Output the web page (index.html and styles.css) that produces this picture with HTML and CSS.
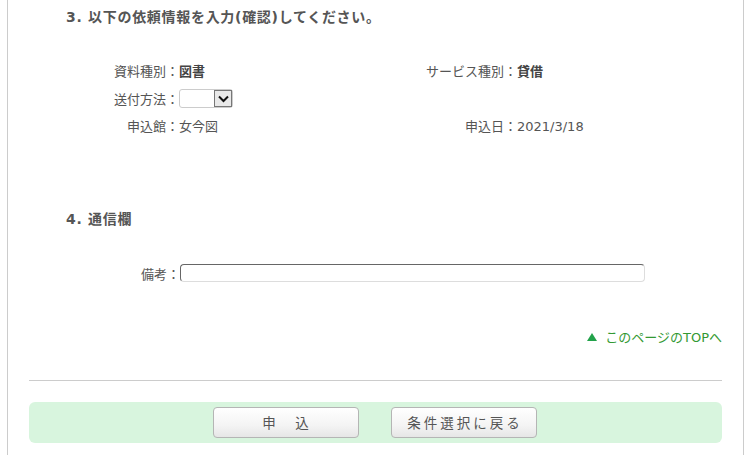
FILE: index.html
```html
<!DOCTYPE html>
<html lang="ja">
<head>
    <meta charset="UTF-8">
    <title>依頼情報の入力</title>
    <link rel="stylesheet" href="styles.css">
</head>
<body>
    <div class="page">
        <h2 class="step">3. 以下の依頼情報を入力(確認)してください。</h2>
        <div class="info">
            <div class="label">資料種別：</div>
            <div class="value"><b>図書</b></div>
            <div class="label">サービス種別：</div>
            <div class="value"><b>貸借</b></div>

            <div class="label">送付方法：</div>
            <div class="value">
                <span class="select"><span class="arrow">
                    <svg width="11" height="8" viewBox="0 0 11 8"><path d="M1 1.5 L5.5 6 L10 1.5" fill="none" stroke="#111" stroke-width="2"/></svg>
                </span></span>
            </div>
            <div class="label"></div>
            <div class="value"></div>

            <div class="label">申込館：</div>
            <div class="value">女今図</div>
            <div class="label">申込日：</div>
            <div class="value">2021/3/18</div>
        </div>

        <h2 class="step step4">4. 通信欄</h2>
        <div class="remark">
            <span class="label">備考：</span>
            <span class="field"></span>
        </div>

        <div class="totop"><span class="tri"></span>このページのTOPへ</div>

        <div class="rule"></div>

        <div class="actions">
            <div class="btn">申　込</div>
            <div class="btn">条件選択に戻る</div>
        </div>
    </div>
</body>
</html>
```

FILE: styles.css
```css
body {
    margin: 0;
    background-color: #fff;
    font-family: "DejaVu Sans", "Noto Sans CJK JP", sans-serif;
    font-size: 13px;
    color: #555;
}
.page {
    margin-left: 7px;
    width: 737px;
    height: 455px;
    border-left: 1px solid #ccc;
    border-right: 1px solid #ccc;
    padding: 0 21px;
    box-sizing: border-box;
}
.step {
    margin: 0;
    padding: 6px 0 0 37px;
    font-size: 14px;
    font-weight: bold;
    color: #555;
    line-height: 22px;
    letter-spacing: 0.7px;
}
.info {
    display: grid;
    grid-template-columns: 150px 226px 112px 1fr;
    grid-auto-rows: 27.5px;
    margin-top: 30px;
    line-height: 27px;
}
.info .label {
    text-align: right;
}
.info b {
    color: #444;
}
.select {
    display: inline-block;
    vertical-align: middle;
    width: 54px;
    height: 19px;
    border: 1px solid #ccc;
    border-radius: 3px;
    box-sizing: border-box;
    position: relative;
    margin-top: -3px;
}
.arrow {
    position: absolute;
    right: 0;
    top: 0;
    width: 18px;
    height: 17px;
    border: 1px solid #777;
    background-color: #e9e9e9;
    box-sizing: border-box;
    display: flex;
    align-items: center;
    justify-content: center;
}
.step4 {
    padding-top: 67px;
}
.remark {
    display: flex;
    align-items: center;
    margin-top: 34px;
    padding-left: 110px;
}
.remark .label {
    width: 41px;
    text-align: right;
}
.field {
    width: 465px;
    height: 18px;
    border: 1px solid #ddd;
    border-top: 1px solid #666;
    border-left: 1px solid #666;
    border-radius: 4px;
    box-sizing: border-box;
}
.totop {
    margin-top: 46px;
    text-align: right;
    color: #339933;
    font-size: 13px;
    line-height: 18px;
}
.tri {
    display: inline-block;
    width: 0;
    height: 0;
    border-left: 5px solid transparent;
    border-right: 5px solid transparent;
    border-bottom: 8px solid #22a24a;
    margin-right: 8px;
    vertical-align: 1px;
}
.rule {
    margin-top: 33px;
    border-top: 1px solid #ccc;
}
.actions {
    margin-top: 21px;
    height: 41px;
    background-color: #d8f5de;
    border-radius: 6px;
    display: flex;
    justify-content: center;
    align-items: center;
    gap: 32px;
    padding-right: 2px;
}
.btn {
    width: 146px;
    height: 31px;
    box-sizing: border-box;
    border: 1px solid #b5b5b5;
    border-radius: 4px;
    background: linear-gradient(#ffffff, #f4f4f4 60%, #e6e6e6);
    display: flex;
    align-items: center;
    justify-content: center;
    letter-spacing: 3px;
    padding-left: 3px;
    color: #555;
    font-size: 13.5px;
}
```
